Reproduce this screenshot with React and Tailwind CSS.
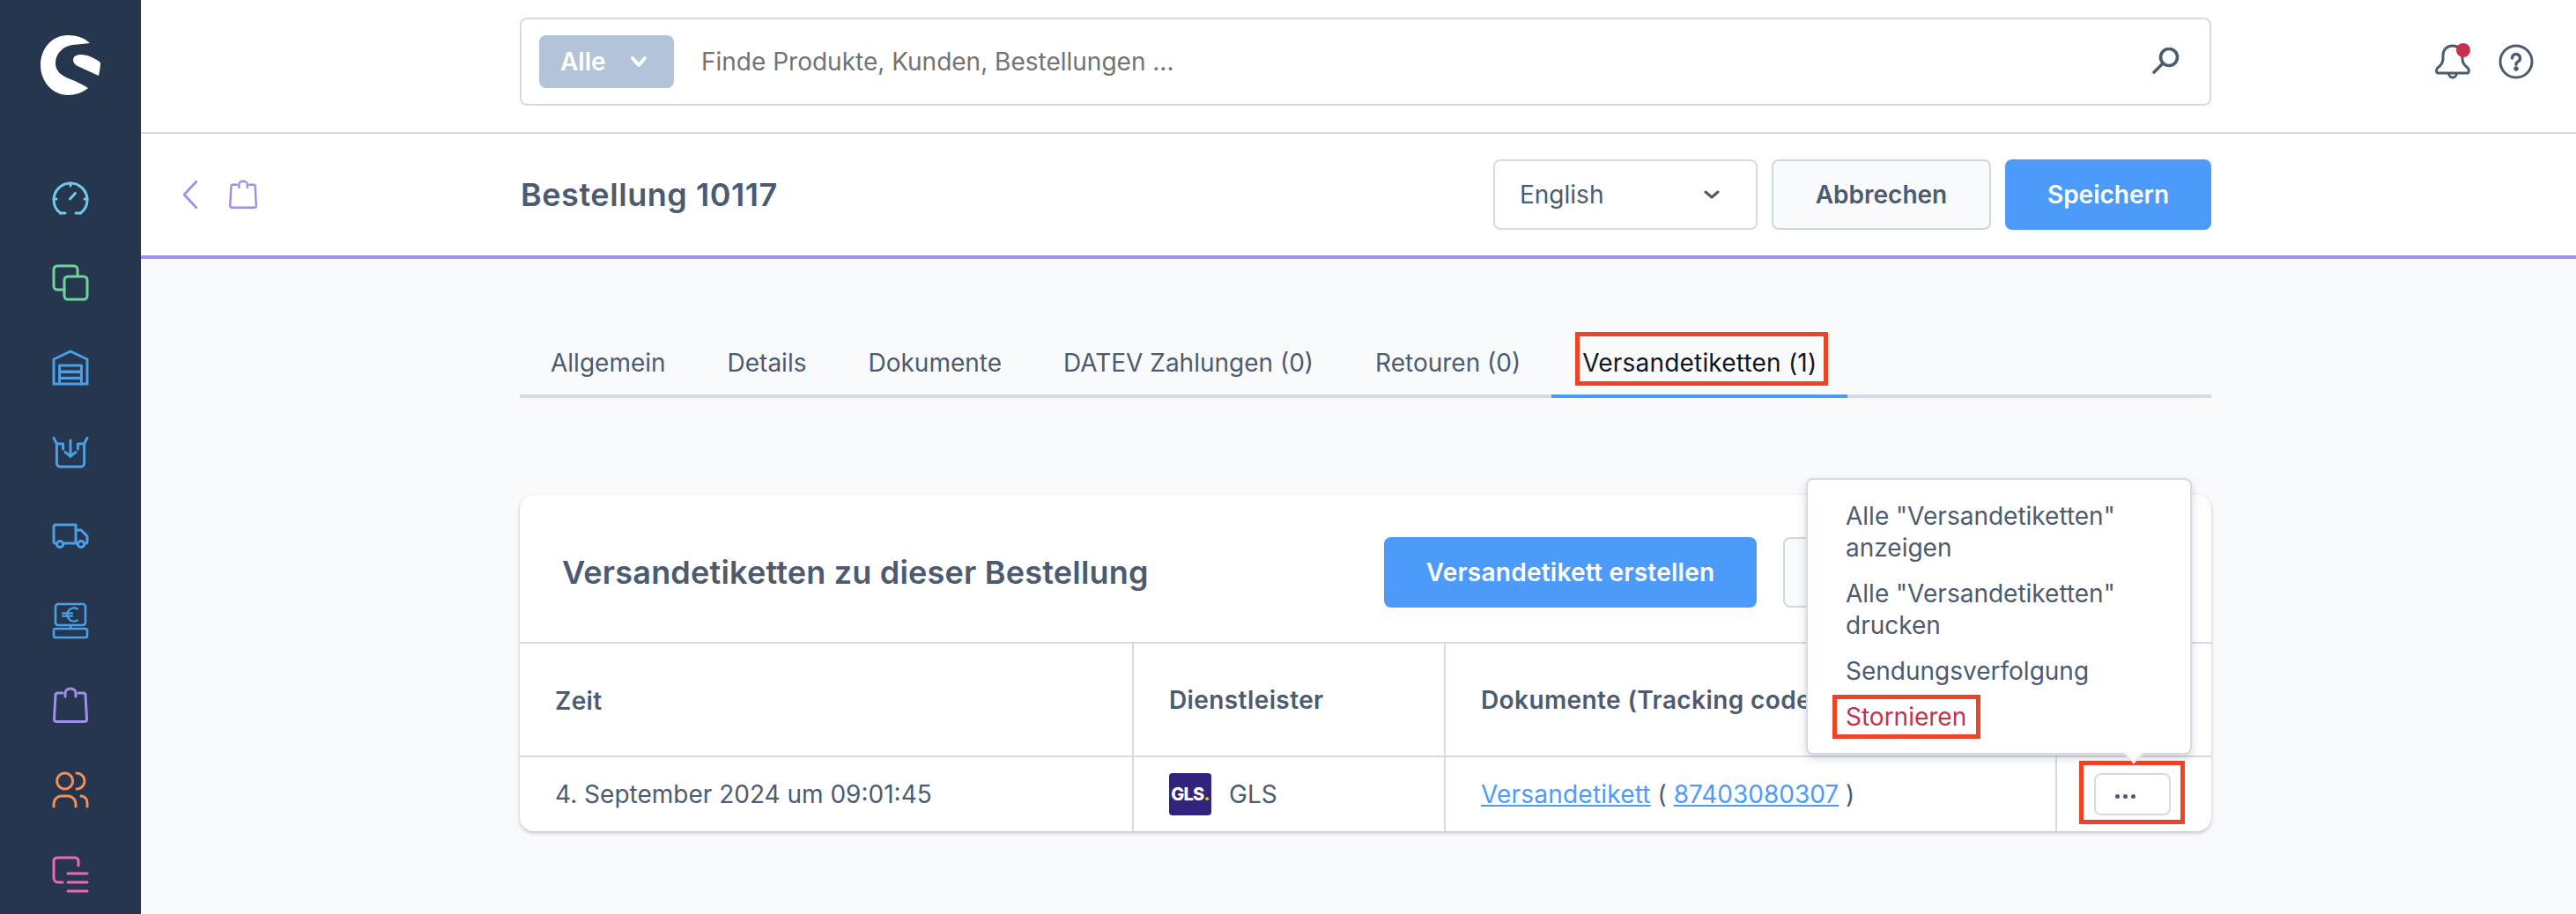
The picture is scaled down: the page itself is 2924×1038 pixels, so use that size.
const F = "[font-family:Inter,'Noto_Sans',sans-serif]";

const Stroke = ({ color, children, vb = "0 0 20 20", w = 1.5, className = "w-[40px] h-[40px]" }) => (
  <svg viewBox={vb} className={`${className} overflow-visible`} fill="none" stroke={color} strokeWidth={w} strokeLinecap="round" strokeLinejoin="round">{children}</svg>
);

function Logo() {
  return (
    <svg viewBox="0 0 68 68" className="w-[68px] h-[68px]">
      <path fill="#fff" d="M56 9C50 3 41 0 31 0C13 0 0 15 0 34C0 53 14 68 31 68C40 68 48 65 54 60C48 56 42 53 34 50C24 46 17 41 17 32C17 21 25 13 36 11C43 10 50 10 56 9Z" />
      <path fill="#fff" d="M37 28C37 24 41 22 46 22C53 22 62 26 68 31C68 36 67 41 66 46C58 42 50 39 42 35C39 33.500 37 31 37 28Z" />
    </svg>
  );
}

const Dash = () => (
  <Stroke color="#6ccce6">
    <path d="M4.300 18.500C2 16.800 .5 14 .5 11A9.500 9.500 0 0 1 19.500 11c0 3-1.500 5.800-3.800 7.500" />
    <path d="M4.300 18.500H7M15.700 18.500H13" />
    <path d="M10 1.500v1.500M.5 10.500h1.500M19.500 10.500h-1.500M9.700 10.500l3-3.300" />
  </Stroke>
);
const Products = () => (
  <Stroke color="#6fd39b">
    <path d="M6.500 14H2.500A2 2 0 0 1 .5 12V2.500A2 2 0 0 1 2.500 .5H12A2 2 0 0 1 14 2.500V6" />
    <rect x="6.500" y="6.500" width="13" height="13" rx="2" />
  </Stroke>
);
const Warehouse = () => (
  <Stroke color="#4a9fe6">
    <path d="M.5 19.500V5.500L10 1l9.500 4.500v14z" />
    <path d="M3.800 19.500V9h12.400v10.500" />
    <path d="M3.800 12.600h12.400M3.800 16.200h12.400" strokeWidth="1.700" />
  </Stroke>
);
const Inbound = () => (
  <Stroke color="#4a9fe6">
    <path d="M.5 2.200L2.200 5.500V16.500a2 2 0 0 0 2 2h11.600a2 2 0 0 0 2-2V5.500L19.500 2.200" />
    <path d="M2.200 5.500H5.800V8.500M17.800 5.500H14.200V8.500" />
    <path d="M10 3.500v9.200M7 10.200L10 12.700 13 10.200" />
  </Stroke>
);
const Truck = () => (
  <Stroke color="#4a9fe6" vb="0 0 20 14" className="w-[40px] h-[28px] my-[6px]">
    <path d="M2.200 11H1.500A1 1 0 0 1 .5 10V1.500a1 1 0 0 1 1-1H13V11H5.800M13 11h1.200M13 3.500h3l3.500 3.500V10a1 1 0 0 1-1 1h-.7" />
    <circle cx="4" cy="11.500" r="1.800" />
    <circle cx="16" cy="11.500" r="1.800" />
  </Stroke>
);
const Pos = () => (
  <Stroke color="#4a9fe6" w="1.300">
    <rect x="1.500" y=".5" width="17" height="12" rx="1.500" />
    <rect x=".5" y="14.500" width="19" height="5" rx="1" />
    <path d="M10 12.500v2" />
    <path d="M14 3.300A3.800 3.800 0 1 0 14 9.700M5.500 5.700h5.500M5.500 7.300h5.500" strokeWidth="1.100" />
  </Stroke>
);
const Bag = ({ className = "w-[40px] h-[40px]" }) => (
  <Stroke color="#9e90ea" className={className}>
    <path d="M5.500 3H2.700a1.200 1.200 0 0 0-1.200 1.100L.75 18a1.300 1.300 0 0 0 1.300 1.250h15.900a1.300 1.300 0 0 0 1.300-1.250L18.500 4.100A1.200 1.200 0 0 0 17.300 3H14.500" />
    <path d="M7 5V3a3 2.500 0 0 1 6 0V5" />
  </Stroke>
);
const People = () => (
  <Stroke color="#ee9059">
    <circle cx="6.800" cy="5" r="4.500" />
    <path d="M.5 19.500v-1.500a4.500 4.500 0 0 1 4.500-4.500h3.500a4.500 4.500 0 0 1 4.500 4.500v1.500" />
    <path d="M13.500 .5a4.500 4.500 0 0 1 0 9M16 13.500a3.600 3.600 0 0 1 3.500 3.800v2.200" />
  </Stroke>
);
const Content = () => (
  <Stroke color="#ec6bb0">
    <path d="M5.500 14.500H3A2.500 2.500 0 0 1 .5 12V2.500A2 2 0 0 1 2.500 .5H12.500a2 2 0 0 1 2 2V5" />
    <path d="M8.500 9.500h11M8.500 14.500h11M8.500 19.500h11" />
  </Stroke>
);

function Tab({ children, active, boxed }) {
  return (
    <div className={`h-[64px] px-[35px] pb-[12px] flex items-center border-b-4 ${active ? "border-[#4c9bfa]" : "border-transparent"}`}>
      {boxed ? (
        <span className="relative text-[#0f1722] tracking-[0.2px]">
          {children}
          <span className="absolute -left-[8px] -right-[13px] top-[-17px] h-[61px] border-[5px] border-[#ee4426]"></span>
        </span>
      ) : children}
    </div>
  );
}

export default function App() {
  return (
    <div className={`${F} flex w-[2924px] h-[1038px] overflow-hidden bg-[#f9fafc] text-[#4c5b70] text-[28px] leading-[36px]`}>
      <aside className="w-[160px] shrink-0 bg-[#27364f] flex flex-col items-center pt-[40px]">
        <Logo />
        <nav className="mt-[97px] flex flex-col items-center gap-[56px]">
          <Dash /><Products /><Warehouse /><Inbound /><Truck /><Pos /><Bag /><People /><Content />
        </nav>
      </aside>

      <main className="flex-1 flex flex-col min-w-0">
        <header className="h-[152px] shrink-0 bg-white border-b-2 border-[#d5dbe1] flex items-center pl-[430px] pb-[10px]">
          <div className="w-[1920px] h-[100px] border-2 border-[#d5dbe1] rounded-[8px] flex items-center pl-[20px] pr-[34px]">
            <div className="w-[153px] h-[60px] bg-[#b3c4d9] rounded-[8px] text-white font-semibold flex items-center pl-[24px] gap-[27px]">
              Alle
              <svg viewBox="0 0 20 14" className="w-[20px] h-[14px]" fill="none" stroke="#fff" strokeWidth="4" strokeLinecap="round" strokeLinejoin="round"><path d="M3 3l7 8 7-8" /></svg>
            </div>
            <span className="ml-[31px] text-[#737373]">Finde Produkte, Kunden, Bestellungen ...</span>
            <svg viewBox="0 0 32 32" className="ml-auto w-[32px] h-[32px]" fill="none" stroke="#4c5b70" strokeWidth="3.600" strokeLinecap="round"><circle cx="20" cy="11" r="9.500" /><path d="M13 18L3 28" /></svg>
          </div>
          <div className="ml-[254px] flex items-center gap-[32px]">
            <div className="relative w-[40px] h-[40px]">
              <svg viewBox="0 0 40 40" className="w-[40px] h-[40px]" fill="none" stroke="#4c5b70" strokeWidth="3" strokeLinecap="round" strokeLinejoin="round">
                <path d="M15.500 33a4.500 5 0 0 0 9 0" />
                <path d="M20 2C13 2 9 7 9 13V17C9 21 7 24 3 27C1 29 1 33 4 33H36C39 33 39 29 37 27C33 24 31 21 31 17V13C31 7 27 2 20 2Z" fill="#fff" />
              </svg>
              <span className="absolute left-[24px] top-[-1px] w-[16px] h-[16px] rounded-full bg-[#c9304a]"></span>
            </div>
            <svg viewBox="0 0 40 40" className="w-[40px] h-[40px]" fill="none" stroke="#4c5b70" strokeWidth="3" strokeLinecap="round">
              <circle cx="20" cy="20" r="18" />
              <path d="M15.500 16a4.500 4.500 0 1 1 7 3.700c-1.500 1-2.500 2-2.500 3.500" strokeWidth="3.400" />
              <circle cx="20" cy="28" r="1.200" fill="#4c5b70" />
            </svg>
          </div>
        </header>

        <div className="h-[142px] shrink-0 bg-white border-b-4 border-[#9f92e8] flex items-center pl-[48px]">
          <svg viewBox="0 0 16 32" className="w-[16px] h-[32px]" fill="none" stroke="#9f92e8" strokeWidth="2.800" strokeLinecap="round" strokeLinejoin="round"><path d="M15 1L1 16l14 15" /></svg>
          <span className="ml-[36px]"><Bag className="w-[32px] h-[32px] block" /></span>
          <h1 className="ml-[299px] text-[36px] leading-[44px] font-semibold tracking-[0.55px]">Bestellung 10117</h1>
          <div className="ml-auto mr-[414px] flex items-center gap-[16px]">
            <div className="w-[300px] h-[80px] bg-white border-2 border-[#d5dbe1] rounded-[8px] flex items-center justify-between pl-[28px] pr-[41px]">
              English
              <svg viewBox="0 0 18 10" className="w-[18px] h-[10px]" fill="none" stroke="#4c5b70" strokeWidth="3" strokeLinecap="round" strokeLinejoin="round"><path d="M2 2l7 6 7-6" /></svg>
            </div>
            <button className="w-[249px] h-[80px] bg-[#f9fafc] border-2 border-[#d1d7de] rounded-[8px] font-semibold text-[#4c5b70]">Abbrechen</button>
            <button className="w-[234px] h-[80px] bg-[#4c9bfa] rounded-[8px] font-semibold text-white">Speichern</button>
          </div>
        </div>

        <div className="flex-1 pl-[430px] w-[2350px]">
          <div className="mt-[154px] h-[4px] bg-[#d5dbe1] w-[1920px] relative">
            <div className="absolute bottom-0 left-0 flex items-end h-[64px]">
              <Tab>Allgemein</Tab><Tab>Details</Tab><Tab>Dokumente</Tab><Tab>DATEV Zahlungen (0)</Tab><Tab>Retouren (0)</Tab><Tab active boxed>Versandetiketten (1)</Tab>
            </div>
          </div>

          <section className="relative mt-[110px] w-[1920px] h-[382px] bg-white rounded-[16px] shadow-[0_2px_4px_rgba(74,91,115,0.35)]">
            <div className="h-[169px] flex items-center pl-[48px] pt-[8px] border-b-2 border-[#d5dbe1]">
              <h2 className="text-[36px] leading-[44px] font-semibold tracking-[0.2px]">Versandetiketten zu dieser Bestellung</h2>
              <button className="absolute left-[981px] top-[48px] w-[423px] h-[80px] bg-[#4c9bfa] rounded-[8px] text-white font-semibold tracking-[0.25px]">Versandetikett erstellen</button>
              <div className="absolute left-[1434px] top-[48px] w-[120px] h-[80px] bg-[#f9fafc] border-2 border-[#d1d7de] rounded-[8px]"></div>
            </div>
            <div className="grid grid-cols-[695px_354px_694px_177px] h-[129px] pt-[2px] border-b-2 border-[#d5dbe1] font-semibold tracking-[0.4px]">
              <div className="flex items-center pl-[40px]">Zeit</div>
              <div className="flex items-center pl-[40px] border-l-2 border-[#d5dbe1] -mt-[2px]">Dienstleister</div>
              <div className="flex items-center pl-[40px] border-l-2 border-[#d5dbe1] -mt-[2px]">Dokumente (Tracking code)</div>
              <div className="border-l-2 border-[#d5dbe1] -mt-[2px]"></div>
            </div>
            <div className="grid grid-cols-[695px_354px_694px_177px] h-[84px]">
              <div className="flex items-center pl-[40px]">4. September 2024 um 09:01:45</div>
              <div className="flex items-center pl-[40px] border-l-2 border-[#d5dbe1] gap-[20px]">
                <span className="w-[48px] h-[48px] rounded-[4px] bg-[#32237c] flex items-center justify-center text-white text-[20px] leading-[48px] font-extrabold tracking-[-0.8px]">GLS<span className="text-[#f6c01e]">.</span></span>
                GLS
              </div>
              <div className="flex items-center pl-[40px] border-l-2 border-[#d5dbe1] whitespace-pre">
                <a className="text-[#4c9bfa] underline tracking-[0.2px]">Versandetikett</a> ( <a className="text-[#4c9bfa] underline">87403080307</a> )
              </div>
              <div className="relative border-l-2 border-[#d5dbe1]">
                <button className="absolute left-[42px] top-[18px] w-[87px] h-[48px] border-2 border-[#d5dbe1] rounded-[8px] bg-white flex items-center pl-[22px] pt-[4px] gap-[4px]">
                  <i className="w-[5px] h-[5px] rounded-full bg-[#4c5b70]"></i><i className="w-[5px] h-[5px] rounded-full bg-[#4c5b70]"></i><i className="w-[5px] h-[5px] rounded-full bg-[#4c5b70]"></i>
                </button>
                <span className="absolute left-[25px] top-[4px] w-[120px] h-[72px] border-[5px] border-[#ee4426]"></span>
              </div>
            </div>

            <div className="absolute left-[1460px] top-[-19px] w-[438px] h-[314px] bg-white border-2 border-[#d5dbe1] rounded-[8px] shadow-[0_4px_10px_rgba(74,91,115,0.25)] pt-[15px] pl-[43px] pr-[20px]">
              <div className="py-[8px]">Alle "Versandetiketten" anzeigen</div>
              <div className="py-[8px]">Alle "Versandetiketten" drucken</div>
              <div className="py-[8px]">Sendungsverfolgung</div>
              <div className="py-[8px] text-[#c9304a] relative w-fit">
                Stornieren
                <span className="absolute -left-[15px] -right-[16px] top-[1px] h-[50px] border-[5px] border-[#ee4426]"></span>
              </div>
              <span className="absolute left-[362px] bottom-[-9px] w-[16px] h-[16px] bg-white rotate-45 border-r-2 border-b-2 border-[#e3e7ec]"></span>
            </div>
          </section>
        </div>
      </main>
    </div>
  );
}
